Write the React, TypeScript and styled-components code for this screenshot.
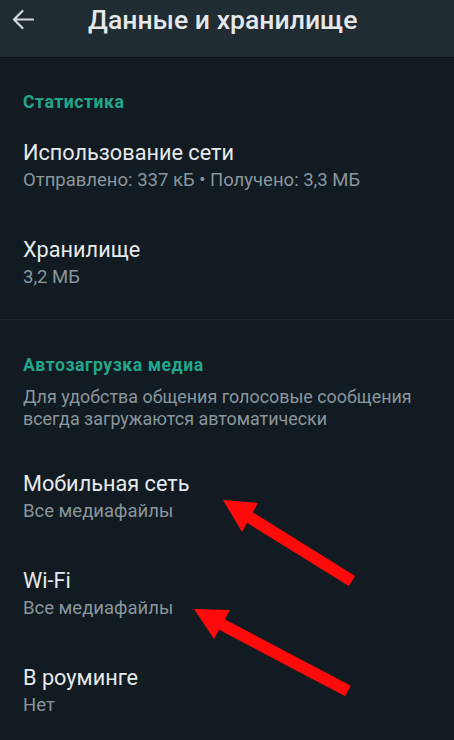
import React from "react";
import styled, { createGlobalStyle } from "styled-components";

const Global = createGlobalStyle`
  html, body { margin: 0; padding: 0; background: #111b21; }
  body { font-family: Roboto, "Noto Sans", sans-serif; -webkit-font-smoothing: antialiased; }
  #root { position: relative; }
`;

const Page = styled.div`
  position: relative;
  width: 454px;
  height: 740px;
  overflow: hidden;
  background: #111b21;
  display: flex;
  flex-direction: column;
  & > * { flex-shrink: 0; }
`;

const Header = styled.header`
  height: 57px;
  box-sizing: border-box;
  background: #212b32;
  display: flex;
  align-items: flex-start;
  padding: 2px 0 0 12px;
  box-shadow: 0 1px 0 #0c1418;
`;

const BackButton = styled.div`
  width: 22px;
  height: 22px;
  margin-top: 7px;
  display: flex;
  color: #d3d9dc;
`;

const Title = styled.h1`
  margin: 0 0 0 54px;
  font-size: 26.6px;
  line-height: 36px;
  font-weight: 500;
  color: #e4e8ea;
`;

const Section = styled.section<{ $divider?: boolean }>`
  padding: 35px 0 ${(p) => (p.$divider ? "9px" : "8px")} 23px;
  border-bottom: ${(p) => (p.$divider ? "1px solid #1e282e" : "none")};
`;

const SectionTitle = styled.div`
  font-size: 17.6px;
  line-height: 20px;
  font-weight: 700;
  letter-spacing: 0.55px;
  color: #21a88b;
  margin-bottom: 4px;
`;

const Description = styled.div`
  font-size: 17.9px;
  line-height: 21.5px;
  color: #8a969d;
  margin-top: 11px;
  margin-bottom: 18px;
  padding-right: 20px;
`;

const Item = styled.div`
  padding: 23.5px 0 23.5px 0;
`;

const ItemTitle = styled.div`
  font-size: 21.7px;
  line-height: 26px;
  color: #e6eaec;
`;

const ItemSub = styled.div`
  font-size: 18.5px;
  line-height: 20px;
  color: #8a969d;
  margin-top: 4px;
`;

const Overlay = styled.svg`
  position: absolute;
  left: 0;
  top: 0;
  pointer-events: none;
`;

const items1 = [
  { t: "Использование сети", s: "Отправлено: 337 кБ • Получено: 3,3 МБ" },
  { t: "Хранилище", s: "3,2 МБ" },
];

const items2 = [
  { t: "Мобильная сеть", s: "Все медиафайлы" },
  { t: "Wi-Fi", s: "Все медиафайлы" },
  { t: "В роуминге", s: "Нет" },
];

export default function App() {
  return (
    <>
      <Global />
      <Page>
        <Header>
          <BackButton>
            <svg width="22" height="22" viewBox="0 0 22 22" fill="none">
              <path
                d="M21 10.5H2M10.5 2L2 10.5L10.5 19"
                stroke="currentColor"
                strokeWidth="2.2"
                strokeLinecap="round"
                strokeLinejoin="round"
              />
            </svg>
          </BackButton>
          <Title>Данные и хранилище</Title>
        </Header>
        <Section $divider>
          <SectionTitle>Статистика</SectionTitle>
          {items1.map((i) => (
            <Item key={i.t}>
              <ItemTitle>{i.t}</ItemTitle>
              <ItemSub>{i.s}</ItemSub>
            </Item>
          ))}
        </Section>
        <Section>
          <SectionTitle>Автозагрузка медиа</SectionTitle>
          <Description>
            Для удобства общения голосовые сообщения всегда загружаются автоматически
          </Description>
          {items2.map((i) => (
            <Item key={i.t}>
              <ItemTitle>{i.t}</ItemTitle>
              <ItemSub>{i.s}</ItemSub>
            </Item>
          ))}
        </Section>
        <Overlay width="454" height="740" viewBox="0 0 454 740">
          <line x1="249" y1="517" x2="352" y2="581" stroke="#ff0a0a" strokeWidth="12" />
          <polygon points="223,500 258,503 242,532" fill="#ff0a0a" />
          <line x1="221" y1="624" x2="348" y2="691" stroke="#ff0a0a" strokeWidth="12" />
          <polygon points="194,609 230,610 214,639" fill="#ff0a0a" />
        </Overlay>
      </Page>
    </>
  );
}
